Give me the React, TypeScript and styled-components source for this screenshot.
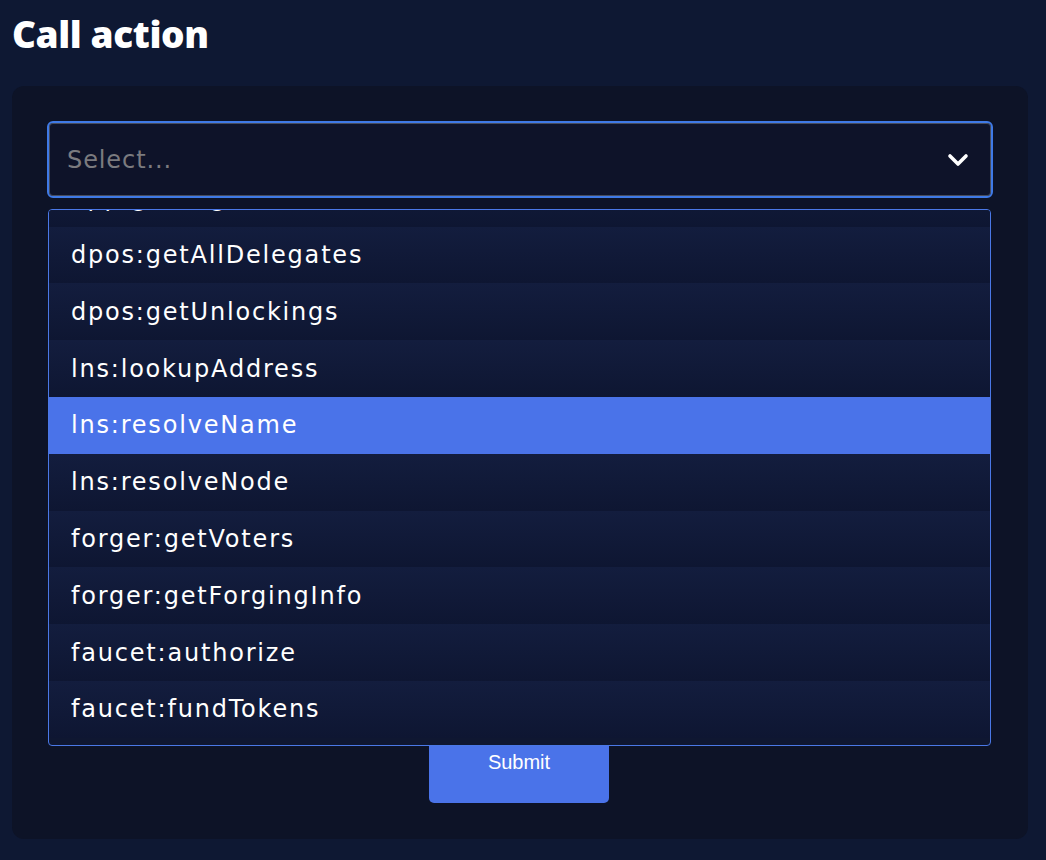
import React, {useLayoutEffect, useRef} from 'react';
import styled, {createGlobalStyle} from 'styled-components';

const GlobalStyle = createGlobalStyle`
  html, body {
    margin: 0;
    padding: 0;
    background: #0e1833;
  }
  body {
    font-family: "DejaVu Sans", "Noto Sans", sans-serif;
    color: #fff;
  }
`

const Page = styled.div`
  padding: 10px 18px 21px 12px;
  height: 860px;
  box-sizing: border-box;
  display: flex;
  flex-direction: column;
`
const Title = styled.h2`
  margin: 0 0 28px;
  font-family: "Open Sans", sans-serif;
  font-weight: 800;
  font-size: 37px;
  line-height: 48px;
  letter-spacing: -0.4px;
`
const Card = styled.div`
  flex: 1;
  background: #0d1327;
  border-radius: 12px;
  padding: 35px 35px 36px;
  display: flex;
  flex-direction: column;
`
const SelectWrap = styled.div`
  position: relative;
`
const Control = styled.div`
  height: 77px;
  box-sizing: border-box;
  border: 2px solid #3f7ae6;
  box-shadow: inset 0 0 0 1px #474c5c;
  border-radius: 6px;
  background: #0e1329;
  display: flex;
  align-items: center;
  padding: 0 22px 0 18px;
`
const Placeholder = styled.span`
  flex: 1;
  font-size: 24px;
  letter-spacing: 0.9px;
  color: #7b7b7f;
`
const Menu = styled.div`
  position: absolute;
  left: 1px;
  right: 2px;
  top: 88px;
  border: 1.5px solid #4a78e6;
  border-radius: 4px;
  background: #0f1731;
  overflow: hidden;
  z-index: 2;
`
const List = styled.div`
  height: 535px;
  overflow-y: auto;
  padding-bottom: 7px;
  box-sizing: border-box;
  scrollbar-width: none;
  &::-webkit-scrollbar { display: none; }
`
const Option = styled.div<{ $active?: boolean }>`
  height: 56.8px;
  box-sizing: border-box;
  display: flex;
  align-items: center;
  padding-left: 22px;
  font-size: 24px;
  letter-spacing: 1.8px;
  color: #fff;
  background: ${p => p.$active ? '#4a73e9' : 'linear-gradient(#131d3e, #0e1632)'};
`
const Body = styled.div`
  flex: 1;
`
const Submit = styled.button`
  align-self: center;
  width: 180px;
  height: 82px;
  margin-right: 2px;
  border: none;
  border-radius: 5px;
  background: #4a73e9;
  color: #fff;
  font-family: "Liberation Sans", Arial, sans-serif;
  font-size: 20px;
  padding: 0;
`

const actions = [
  'app:getNodeInfo',
  'app:getRegisteredEvents',
  'dpos:getAllDelegates',
  'dpos:getUnlockings',
  'lns:lookupAddress',
  'lns:resolveName',
  'lns:resolveNode',
  'forger:getVoters',
  'forger:getForgingInfo',
  'faucet:authorize',
  'faucet:fundTokens',
]

const Chevron = () =>
  <svg width="22" height="14" viewBox="0 0 22 14">
    <polyline points="3,3 11,11 19,3" fill="none" stroke="#fff" strokeWidth="3.6"
              strokeLinecap="round" strokeLinejoin="round"/>
  </svg>

function App() {
  const listRef = useRef<HTMLDivElement>(null)
  useLayoutEffect(() => {
    if (listRef.current) listRef.current.scrollTop = listRef.current.scrollHeight
  }, [])
  return (
    <Page>
      <GlobalStyle/>
      <Title>Call action</Title>
      <Card>
        <SelectWrap>
          <Control>
            <Placeholder>Select...</Placeholder>
            <Chevron/>
          </Control>
          <Menu>
            <List ref={listRef}>
              {actions.map(a =>
                <Option key={a} $active={a === 'lns:resolveName'}>{a}</Option>
              )}
            </List>
          </Menu>
        </SelectWrap>
        <Body/>
        <Submit>Submit</Submit>
      </Card>
    </Page>
  )
}

export default App;
